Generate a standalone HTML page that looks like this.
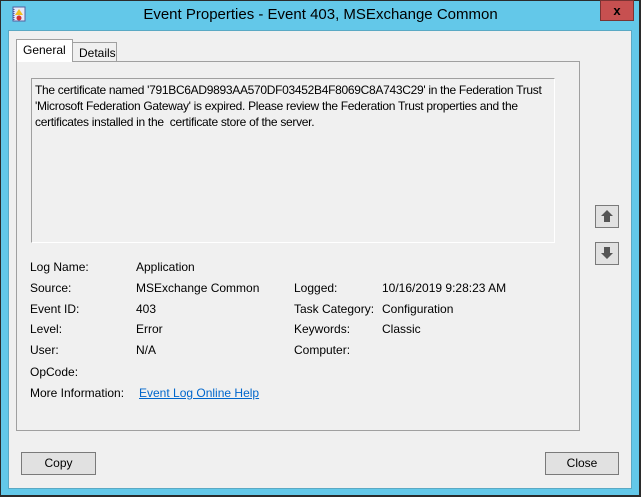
<!DOCTYPE html>
<html><head><style>
body{margin:0;width:641px;height:497px;overflow:hidden;font-family:"Liberation Sans",sans-serif;font-size:12px;color:#000;background:#2b2b2b}
.win{position:absolute;left:1px;top:1px;width:638px;height:494px;background:#63c8e9}
.title{position:absolute;left:0;top:0;width:641px;text-align:center;top:6px;font-size:15px;color:#000}
.client{position:absolute;left:8px;top:30px;width:624px;height:459px;background:#f0f0f0;border:1px solid #5aa9c4;box-sizing:border-box}
.abs{position:absolute}
.panel{left:16px;top:61px;width:564px;height:370px;background:#f0f0f0;border:1px solid #a0a0a0;box-sizing:border-box;position:absolute}
.tab{position:absolute;border:1px solid #a0a0a0;border-bottom:none;box-sizing:border-box;padding:3px 0 0 6px}
.btn{position:absolute;background:#e1e1e1;border:1px solid #7a7a7a;box-sizing:border-box;text-align:center;line-height:20px;font-size:12px}
.lbl{position:absolute;white-space:nowrap}
</style></head><body>
<div class="win"></div>
<div class="abs" style="left:600px;top:0;width:34px;height:21px;background:#c75050;border:1px solid #7a3333;box-sizing:border-box;text-align:center;font-weight:bold;font-size:13px;line-height:19px">x</div>
<svg class="abs" style="left:11px;top:6px" width="16" height="16"><rect x="2" y="1" width="12" height="14" fill="#e8e8f8" stroke="#5060a0"/><line x1="3" y1="3" x2="3" y2="14" stroke="#4050a0" stroke-dasharray="1 1"/><polygon points="8,3 12,9 4,9" fill="#f0c020"/><circle cx="8" cy="12" r="2.5" fill="#d03030"/></svg>
<div class="title">Event Properties - Event 403, MSExchange Common</div>
<div class="client"></div>
<div class="panel"></div>
<div class="tab" style="left:72px;top:42px;width:45px;height:19px;background:#f0f0f0">Details</div>
<div class="tab" style="left:16px;top:39px;width:57px;height:23px;background:#fff">General</div>
<div class="abs" style="left:31px;top:78px;width:524px;height:165px;border-top:1px solid #a0a0a0;border-left:1px solid #a0a0a0;border-right:1px solid #fff;border-bottom:1px solid #fff;box-sizing:border-box;background:#f0f0f0;padding:3px 3px;line-height:16px;font-size:12px;white-space:nowrap;letter-spacing:-0.3px">The certificate named '791BC6AD9893AA570DF03452B4F8069C8A743C29' in the Federation Trust<br>'Microsoft Federation Gateway' is expired. Please review the Federation Trust properties and the<br>certificates installed in the &nbsp;certificate store of the server.</div>
<div class="btn" style="left:595px;top:205px;width:24px;height:23px"><svg width="14" height="14" style="margin-top:3px"><polygon points="7,1 13,7 10,7 10,13 4,13 4,7 1,7" fill="#555"/></svg></div>
<div class="btn" style="left:595px;top:242px;width:24px;height:23px"><svg width="14" height="14" style="margin-top:3px"><polygon points="7,13 13,7 10,7 10,1 4,1 4,7 1,7" fill="#555"/></svg></div>
<div class="lbl" style="left:30px;top:260px">Log Name:</div><div class="lbl" style="left:136px;top:260px">Application</div>
<div class="lbl" style="left:30px;top:281px">Source:</div><div class="lbl" style="left:136px;top:281px">MSExchange Common</div>
<div class="lbl" style="left:294px;top:281px">Logged:</div><div class="lbl" style="left:382px;top:281px">10/16/2019 9:28:23 AM</div>
<div class="lbl" style="left:30px;top:302px">Event ID:</div><div class="lbl" style="left:136px;top:302px">403</div>
<div class="lbl" style="left:294px;top:302px">Task Category:</div><div class="lbl" style="left:382px;top:302px">Configuration</div>
<div class="lbl" style="left:30px;top:322px">Level:</div><div class="lbl" style="left:136px;top:322px">Error</div>
<div class="lbl" style="left:294px;top:322px">Keywords:</div><div class="lbl" style="left:382px;top:322px">Classic</div>
<div class="lbl" style="left:30px;top:343px">User:</div><div class="lbl" style="left:136px;top:343px">N/A</div>
<div class="lbl" style="left:294px;top:343px">Computer:</div>
<div class="lbl" style="left:30px;top:365px">OpCode:</div>
<div class="lbl" style="left:30px;top:386px">More Information:</div><div class="lbl" style="left:139px;top:386px;color:#0066cc;text-decoration:underline">Event Log Online Help</div>
<div class="btn" style="left:21px;top:452px;width:75px;height:23px">Copy</div>
<div class="btn" style="left:545px;top:452px;width:74px;height:23px">Close</div>
</body></html>
